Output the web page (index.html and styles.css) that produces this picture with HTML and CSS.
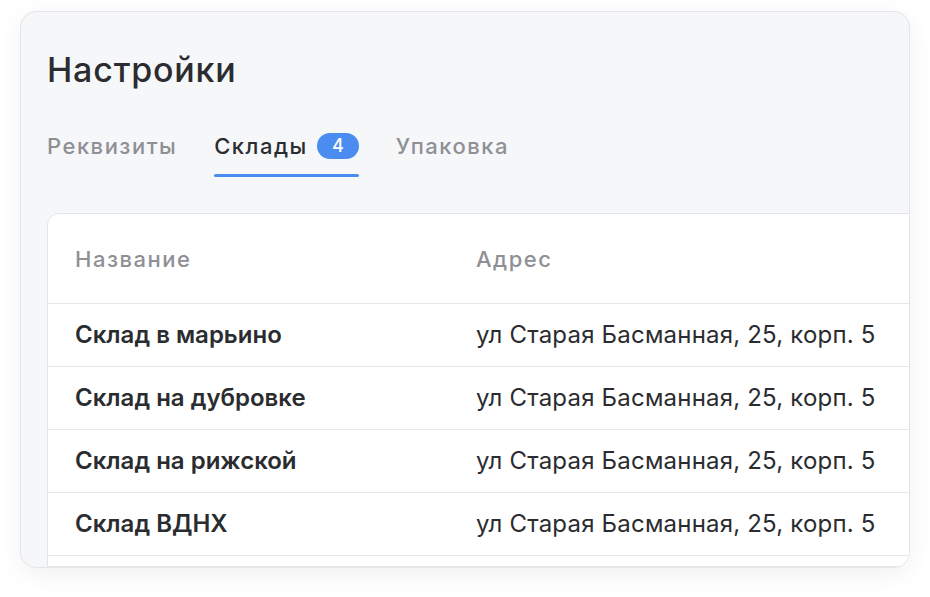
FILE: index.html
```html
<!DOCTYPE html>
<html lang="ru">
<head>
<meta charset="utf-8">
<title>Настройки</title>
<link rel="stylesheet" href="styles.css">
</head>
<body>
<div class="page">
  <section class="panel">
    <h1 class="title">Настройки</h1>
    <nav class="tabs">
      <a class="tab">Реквизиты</a>
      <a class="tab active">Склады <span class="badge">4</span></a>
      <a class="tab">Упаковка</a>
    </nav>
    <div class="table-card">
      <div class="row head">
        <div class="cell name">Название</div>
        <div class="cell addr">Адрес</div>
      </div>
      <div class="row">
        <div class="cell name">Склад в марьино</div>
        <div class="cell addr">ул Старая Басманная, 25, корп. 5</div>
      </div>
      <div class="row">
        <div class="cell name">Склад на дубровке</div>
        <div class="cell addr">ул Старая Басманная, 25, корп. 5</div>
      </div>
      <div class="row">
        <div class="cell name">Склад на рижской</div>
        <div class="cell addr">ул Старая Басманная, 25, корп. 5</div>
      </div>
      <div class="row">
        <div class="cell name">Склад ВДНХ</div>
        <div class="cell addr">ул Старая Басманная, 25, корп. 5</div>
      </div>
    </div>
  </section>
</div>
</body>
</html>
```

FILE: styles.css
```css
* { box-sizing: border-box; }
html, body { margin: 0; padding: 0; background: #ffffff; }
body {
  font-family: Inter, "Noto Sans", sans-serif;
  color: #2b2c30;
  -webkit-font-smoothing: antialiased;
}
.page {
  padding: 11px 20px 0 20px;
  width: 930px;
  height: 597px;
}
.panel {
  width: 890px;
  height: 557px;
  background: #f6f7f9;
  border: 1px solid #e4e5e9;
  border-radius: 16px;
  box-shadow: 0 6px 24px rgba(20, 25, 40, 0.06);
  overflow: hidden;
  padding: 0 0 0 26px;
  display: flex;
  flex-direction: column;
}
.title {
  margin: 38px 0 0 0;
  font-size: 34px;
  line-height: 40px;
  font-weight: 500;
  letter-spacing: 0.8px;
  color: #2b2c30;
}
.tabs {
  display: flex;
  align-items: flex-start;
  gap: 37px;
  margin-top: 43px;
  height: 44px;
}
.tab {
  position: relative;
  display: flex;
  align-items: flex-start;
  gap: 9px;
  height: 44px;
  font-size: 22px;
  line-height: 26px;
  font-weight: 500;
  letter-spacing: 1.5px;
  color: #8e9095;
}
.tab.active { color: #2b2c30; }
.tab.active::after {
  content: "";
  position: absolute;
  left: 0;
  right: 0;
  bottom: 0;
  height: 3px;
  border-radius: 2px;
  background: #4a8cef;
}
.badge {
  display: inline-flex;
  align-items: center;
  justify-content: center;
  width: 42px;
  height: 26px;
  border-radius: 13px;
  background: #4a8cef;
  color: #ffffff;
  font-size: 18px;
  font-weight: 500;
  letter-spacing: 0;
}
.table-card {
  margin-top: 36px;
  width: 900px;
  flex: 1;
  background: #ffffff;
  border: 1px solid #e4e5e9;
  border-radius: 12px 0 0 0;
}
.row {
  display: flex;
  align-items: center;
  height: 63px;
  border-bottom: 1px solid #e6e7eb;
}
.row.head { height: 90px; }
.cell {
  font-size: 24px;
  line-height: 28px;
  white-space: nowrap;
}
.cell.name {
  width: 428px;
  padding-left: 27px;
  font-weight: 600;
}
.cell.addr {
  font-weight: 400;
  letter-spacing: 0.2px;
}
.row.head .cell {
  font-size: 22px;
  color: #8e9095;
  font-weight: 500;
  letter-spacing: 1.5px;
}
```
